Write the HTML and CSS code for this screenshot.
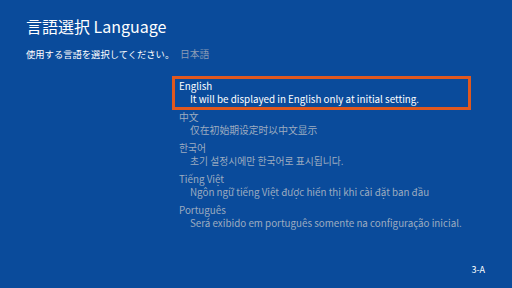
FILE: index.html
```html
<!DOCTYPE html>
<html lang="ja">
<head>
    <meta charset="UTF-8">
    <title>言語選択 Language</title>
    <link rel="stylesheet" href="styles.css">
</head>
<body>
    <div class="screen">
        <h1>言語選択 Language</h1>
        <div class="main">
            <p class="prompt">使用する言語を選択してください。</p>
            <div class="langs">
                <div class="current">日本語</div>
                <ul class="lang-list">
                    <li class="lang selected">
                        <div class="name">English</div>
                        <div class="desc">It will be displayed in English only at initial setting.</div>
                    </li>
                    <li class="lang">
                        <div class="name">中文</div>
                        <div class="desc">仅在初始期设定时以中文显示</div>
                    </li>
                    <li class="lang">
                        <div class="name">한국어</div>
                        <div class="desc">초기 설정시에만 한국어로 표시됩니다.</div>
                    </li>
                    <li class="lang">
                        <div class="name">Tiếng Việt</div>
                        <div class="desc">Ngôn ngữ tiếng Việt được hiển thị khi cài đặt ban đầu</div>
                    </li>
                    <li class="lang">
                        <div class="name">Português</div>
                        <div class="desc">Será exibido em português somente na configuração inicial.</div>
                    </li>
                </ul>
            </div>
        </div>
        <div class="page-no">3-A</div>
    </div>
</body>
</html>
```

FILE: styles.css
```css
body {
    margin: 0;
    background-color: #0a4b9b;
    color: #fff;
    font-family: "Noto Sans CJK JP", "Noto Sans", sans-serif;
}
.screen {
    width: 512px;
    height: 288px;
    box-sizing: border-box;
    padding: 15px 0 0 26px;
    position: relative;
}
h1 {
    margin: 0;
    font-size: 16px;
    font-weight: normal;
    line-height: 22px;
}
.main {
    display: flex;
    margin-top: 11px;
}
.prompt {
    margin: 0;
    width: 149px;
    white-space: nowrap;
    font-size: 9.3px;
    line-height: 13px;
}
.langs {
    font-size: 9.8px;
    line-height: 13px;
    color: #9dabc0;
}
.current {
    padding-left: 5px;
    color: #8c9cb6;
}
.lang-list {
    list-style: none;
    margin: 18px 0 0;
    padding: 0;
}
.lang {
    width: 289px;
    padding: 1px 0 1px 4px;
    margin-bottom: 3px;
}
.lang.selected {
    outline: 3px solid #e0581e;
    color: #fff;
}
.desc {
    padding-left: 11px;
}
.page-no {
    position: absolute;
    right: 27px;
    bottom: 12px;
    font-size: 9px;
}
```
